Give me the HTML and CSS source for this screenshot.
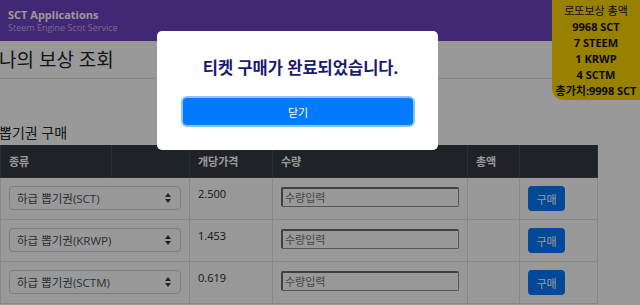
FILE: index.html
```html
<!DOCTYPE html>
<html>
<head>
    <meta charset="UTF-8">
    <meta name="viewport" content="width=device-width, initial-scale=1.0">
    <title>SCT Applications</title>
    <link rel="stylesheet" href="styles.css">
</head>
<body>
    <header class="topbar">
        <div class="brand">SCT Applications</div>
        <div class="brand-sub">Steem Engine Scot Service</div>
    </header>

    <div class="lotto">
        <div class="lotto-title">로또보상 총액</div>
        <div>9968 SCT</div>
        <div>7 STEEM</div>
        <div>1 KRWP</div>
        <div>4 SCTM</div>
        <div>총가치:9998 SCT</div>
    </div>

    <div class="content">
        <h2 class="page-title">나의 보상 조회</h2>
        <hr class="divider">

        <h4 class="section-title">뽑기권 구매</h4>
        <table class="tickets">
            <colgroup>
                <col style="width:111px">
                <col style="width:78px">
                <col style="width:83px">
                <col style="width:195px">
                <col style="width:52px">
                <col style="width:78px">
            </colgroup>
            <thead>
                <tr>
                    <th>종류</th>
                    <th></th>
                    <th>개당가격</th>
                    <th>수량</th>
                    <th>총액</th>
                    <th></th>
                </tr>
            </thead>
            <tbody>
                <tr>
                    <td colspan="2"><select class="kind"><option>하급 뽑기권(SCT)</option></select></td>
                    <td>2.500</td>
                    <td><input class="qty" type="text" placeholder="수량입력"></td>
                    <td></td>
                    <td><button class="buy">구매</button></td>
                </tr>
                <tr>
                    <td colspan="2"><select class="kind"><option>하급 뽑기권(KRWP)</option></select></td>
                    <td>1.453</td>
                    <td><input class="qty" type="text" placeholder="수량입력"></td>
                    <td></td>
                    <td><button class="buy">구매</button></td>
                </tr>
                <tr>
                    <td colspan="2"><select class="kind"><option>하급 뽑기권(SCTM)</option></select></td>
                    <td>0.619</td>
                    <td><input class="qty" type="text" placeholder="수량입력"></td>
                    <td></td>
                    <td><button class="buy">구매</button></td>
                </tr>
            </tbody>
        </table>
    </div>

    <div class="overlay"></div>

    <div class="modal">
        <div class="modal-title">티켓 구매가 완료되었습니다.</div>
        <button class="modal-close">닫기</button>
    </div>
</body>
</html>
```

FILE: styles.css
```css
body {
    margin: 0;
    font-family: "Open Sans", "Noto Sans CJK KR", sans-serif;
    font-size: 12px;
    color: #212529;
    background-color: white;
    overflow: hidden;
}

.topbar {
    height: 41px;
    box-sizing: border-box;
    padding: 8px 8px;
    background-color: #6f42c1;
    color: white;
}

.brand {
    font-size: 11px;
    font-weight: bold;
    line-height: 14px;
}

.brand-sub {
    font-size: 9px;
    line-height: 12px;
    color: rgba(255, 255, 255, 0.6);
}

.lotto {
    position: absolute;
    top: 0;
    right: 0;
    width: 88px;
    height: 100px;
    box-sizing: border-box;
    padding-top: 3px;
    background-color: #ffd700;
    border-bottom-left-radius: 12px;
    text-align: center;
    font-size: 11px;
    font-weight: bold;
    line-height: 16px;
    color: #111;
}

.lotto-title {
    font-weight: normal;
}

.content {
    margin-left: -1px;
}

.page-title {
    margin: 0;
    padding-top: 5px;
    font-size: 19px;
    font-weight: normal;
    line-height: 28px;
}

.divider {
    margin: 4px 0 0 0;
    border: none;
    border-top: 1px solid rgba(0, 0, 0, 0.12);
}

.section-title {
    margin: 0;
    padding-top: 42px;
    font-size: 14px;
    font-weight: normal;
    line-height: 24px;
}

.tickets {
    table-layout: fixed;
    width: 597px;
    border-collapse: collapse;
    margin-left: 1px;
}

.tickets th {
    background-color: #343a40;
    color: white;
    font-size: 11px;
    font-weight: bold;
    text-align: left;
    padding: 8px;
    height: 15px;
    border: 1px solid #454d55;
    border-top: none;
}

.tickets td {
    padding: 8px;
    vertical-align: top;
    border: 1px solid #dee2e6;
    font-size: 11px;
    line-height: 16px;
}

.kind {
    width: 100%;
    height: 24px;
    padding: 0 20px 0 7px;
    font-family: inherit;
    font-size: 11.5px;
    color: #495057;
    background: white url("data:image/svg+xml;utf8,<svg xmlns='http://www.w3.org/2000/svg' width='6' height='10' viewBox='0 0 6 10'><path d='M3 0L0 4h6zM3 10L0 6h6z' fill='%23343a40'/></svg>") no-repeat right 9px center;
    border: 1px solid #ced4da;
    border-radius: 4px;
    -webkit-appearance: none;
    appearance: none;
}

.qty {
    width: 100%;
    height: 20px;
    box-sizing: border-box;
    margin-top: 1px;
    padding: 0 2px;
    font-family: inherit;
    font-size: 11px;
    border-width: 2px 1px 1px 2px;
    border-style: solid;
    border-color: #6b6b6b #8f8f8f #8f8f8f #6b6b6b;
    border-radius: 2px;
}

.qty::placeholder {
    color: #757575;
}

.buy {
    width: 37px;
    height: 25px;
    padding: 0;
    font-family: inherit;
    font-size: 11px;
    color: white;
    background-color: #007bff;
    border: none;
    border-radius: 4px;
}

.overlay {
    position: fixed;
    top: 0;
    left: 0;
    right: 0;
    bottom: 0;
    background-color: rgba(0, 0, 0, 0.4);
}

.modal {
    position: fixed;
    top: 31px;
    left: 157px;
    width: 281px;
    height: 119px;
    box-sizing: border-box;
    padding: 26px 26px 0 26px;
    background-color: white;
    border-radius: 5px;
    text-align: center;
}

.modal-title {
    font-size: 16.5px;
    font-weight: bold;
    line-height: 22px;
    color: #1a1a6e;
    padding-left: 6px;
}

.modal-close {
    display: block;
    width: 230px;
    height: 27px;
    margin: 19px 0 0 0;
    font-family: inherit;
    font-size: 11px;
    color: white;
    background-color: #007bff;
    border: none;
    border-radius: 4px;
    box-shadow: 0 0 0 2px rgba(0, 123, 255, 0.45);
}
```
